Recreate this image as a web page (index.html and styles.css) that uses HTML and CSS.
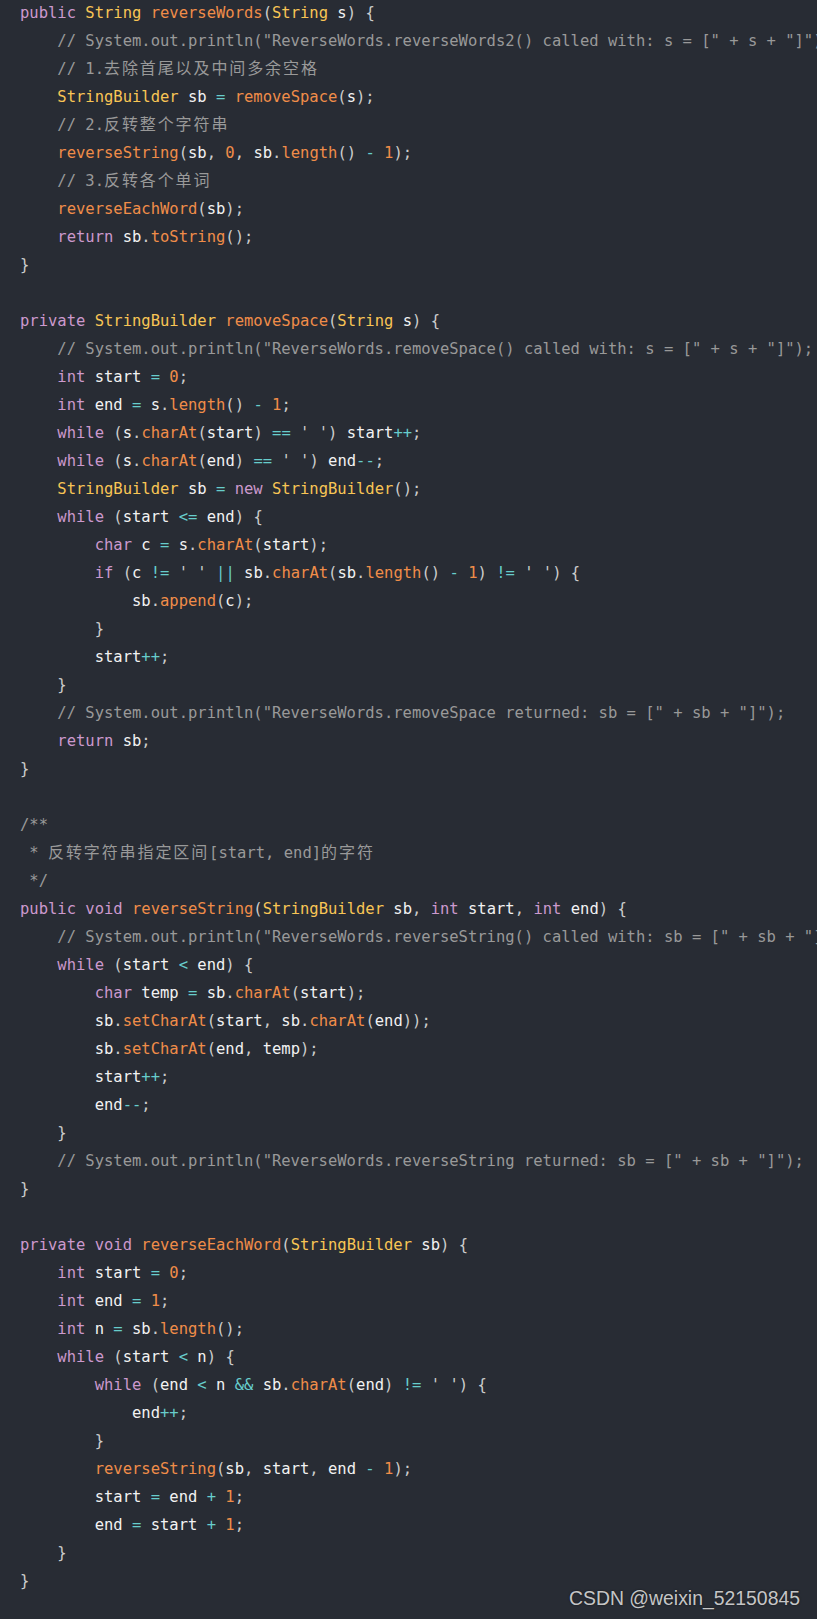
FILE: index.html
```html
<!DOCTYPE html>
<html lang="zh">
<head>
<meta charset="utf-8">
<title>reverseWords</title>
<link rel="stylesheet" href="styles.css">
</head>
<body>
<main class="page">
<pre class="code"><code><span class="k">public</span> <span class="t">String</span> <span class="f">reverseWords</span><span class="p">(</span><span class="t">String</span> s<span class="p">)</span> <span class="p">{</span>
    <span class="c">// System.out.println("ReverseWords.reverseWords2() called with: s = [" + s + "]");</span>
    <span class="c">// 1.<span class="zh">去除首尾以及中间多余空格</span></span>
    <span class="t">StringBuilder</span> sb <span class="o">=</span> <span class="f">removeSpace</span><span class="p">(</span>s<span class="p">);</span>
    <span class="c">// 2.<span class="zh">反转整个字符串</span></span>
    <span class="f">reverseString</span><span class="p">(</span>sb<span class="p">,</span> <span class="n">0</span><span class="p">,</span> sb<span class="p">.</span><span class="f">length</span><span class="p">()</span> <span class="o">-</span> <span class="n">1</span><span class="p">);</span>
    <span class="c">// 3.<span class="zh">反转各个单词</span></span>
    <span class="f">reverseEachWord</span><span class="p">(</span>sb<span class="p">);</span>
    <span class="k">return</span> sb<span class="p">.</span><span class="f">toString</span><span class="p">();</span>
<span class="p">}</span>

<span class="k">private</span> <span class="t">StringBuilder</span> <span class="f">removeSpace</span><span class="p">(</span><span class="t">String</span> s<span class="p">)</span> <span class="p">{</span>
    <span class="c">// System.out.println("ReverseWords.removeSpace() called with: s = [" + s + "]");</span>
    <span class="k">int</span> start <span class="o">=</span> <span class="n">0</span><span class="p">;</span>
    <span class="k">int</span> end <span class="o">=</span> s<span class="p">.</span><span class="f">length</span><span class="p">()</span> <span class="o">-</span> <span class="n">1</span><span class="p">;</span>
    <span class="k">while</span> <span class="p">(</span>s<span class="p">.</span><span class="f">charAt</span><span class="p">(</span>start<span class="p">)</span> <span class="o">==</span> <span class="p">' ')</span> start<span class="o">++</span><span class="p">;</span>
    <span class="k">while</span> <span class="p">(</span>s<span class="p">.</span><span class="f">charAt</span><span class="p">(</span>end<span class="p">)</span> <span class="o">==</span> <span class="p">' ')</span> end<span class="o">--</span><span class="p">;</span>
    <span class="t">StringBuilder</span> sb <span class="o">=</span> <span class="k">new</span> <span class="t">StringBuilder</span><span class="p">();</span>
    <span class="k">while</span> <span class="p">(</span>start <span class="o">&lt;=</span> end<span class="p">)</span> <span class="p">{</span>
        <span class="k">char</span> c <span class="o">=</span> s<span class="p">.</span><span class="f">charAt</span><span class="p">(</span>start<span class="p">);</span>
        <span class="k">if</span> <span class="p">(</span>c <span class="o">!=</span> <span class="p">' '</span> <span class="o">||</span> sb<span class="p">.</span><span class="f">charAt</span><span class="p">(</span>sb<span class="p">.</span><span class="f">length</span><span class="p">()</span> <span class="o">-</span> <span class="n">1</span><span class="p">)</span> <span class="o">!=</span> <span class="p">' ')</span> <span class="p">{</span>
            sb<span class="p">.</span><span class="f">append</span><span class="p">(</span>c<span class="p">);</span>
        <span class="p">}</span>
        start<span class="o">++</span><span class="p">;</span>
    <span class="p">}</span>
    <span class="c">// System.out.println("ReverseWords.removeSpace returned: sb = [" + sb + "]");</span>
    <span class="k">return</span> sb<span class="p">;</span>
<span class="p">}</span>

<span class="c">/**</span>
<span class="c"> * <span class="zh">反转字符串指定区间</span>[start, end]<span class="zh">的字符</span></span>
<span class="c"> */</span>
<span class="k">public</span> <span class="k">void</span> <span class="f">reverseString</span><span class="p">(</span><span class="t">StringBuilder</span> sb<span class="p">,</span> <span class="k">int</span> start<span class="p">,</span> <span class="k">int</span> end<span class="p">)</span> <span class="p">{</span>
    <span class="c">// System.out.println("ReverseWords.reverseString() called with: sb = [" + sb + "], start = [" + start + "], end = [" + end + "]");</span>
    <span class="k">while</span> <span class="p">(</span>start <span class="o">&lt;</span> end<span class="p">)</span> <span class="p">{</span>
        <span class="k">char</span> temp <span class="o">=</span> sb<span class="p">.</span><span class="f">charAt</span><span class="p">(</span>start<span class="p">);</span>
        sb<span class="p">.</span><span class="f">setCharAt</span><span class="p">(</span>start<span class="p">,</span> sb<span class="p">.</span><span class="f">charAt</span><span class="p">(</span>end<span class="p">));</span>
        sb<span class="p">.</span><span class="f">setCharAt</span><span class="p">(</span>end<span class="p">,</span> temp<span class="p">);</span>
        start<span class="o">++</span><span class="p">;</span>
        end<span class="o">--</span><span class="p">;</span>
    <span class="p">}</span>
    <span class="c">// System.out.println("ReverseWords.reverseString returned: sb = [" + sb + "]");</span>
<span class="p">}</span>

<span class="k">private</span> <span class="k">void</span> <span class="f">reverseEachWord</span><span class="p">(</span><span class="t">StringBuilder</span> sb<span class="p">)</span> <span class="p">{</span>
    <span class="k">int</span> start <span class="o">=</span> <span class="n">0</span><span class="p">;</span>
    <span class="k">int</span> end <span class="o">=</span> <span class="n">1</span><span class="p">;</span>
    <span class="k">int</span> n <span class="o">=</span> sb<span class="p">.</span><span class="f">length</span><span class="p">();</span>
    <span class="k">while</span> <span class="p">(</span>start <span class="o">&lt;</span> n<span class="p">)</span> <span class="p">{</span>
        <span class="k">while</span> <span class="p">(</span>end <span class="o">&lt;</span> n <span class="o">&amp;&amp;</span> sb<span class="p">.</span><span class="f">charAt</span><span class="p">(</span>end<span class="p">)</span> <span class="o">!=</span> <span class="p">' ')</span> <span class="p">{</span>
            end<span class="o">++</span><span class="p">;</span>
        <span class="p">}</span>
        <span class="f">reverseString</span><span class="p">(</span>sb<span class="p">,</span> start<span class="p">,</span> end <span class="o">-</span> <span class="n">1</span><span class="p">);</span>
        start <span class="o">=</span> end <span class="o">+</span> <span class="n">1</span><span class="p">;</span>
        end <span class="o">=</span> start <span class="o">+</span> <span class="n">1</span><span class="p">;</span>
    <span class="p">}</span>
<span class="p">}</span></code></pre>
<div class="watermark">CSDN @weixin_52150845</div>
</main>
</body>
</html>
```

FILE: styles.css
```css
html, body {
  margin: 0;
  padding: 0;
  background: #282c34;
}

.page {
  position: relative;
  width: 817px;
  height: 1619px;
  overflow: hidden;
  background: #282c34;
}

.code {
  margin: -1px 0 0 0;
  padding: 0 0 0 20px;
  font-family: "DejaVu Sans Mono", "Noto Sans CJK SC", monospace;
  font-size: 15.5px;
  line-height: 28px;
  color: #f2f2f2;
  white-space: pre;
}

.code code {
  font-family: inherit;
}

.zh {
  font-family: "Noto Sans CJK SC", sans-serif;
  font-size: 16px;
  line-height: 16px;
  letter-spacing: 1.9px;
}

.k { color: #cc99cd; }
.t { color: #f8c555; }
.f { color: #f08d49; }
.n { color: #f08d49; }
.o { color: #67cdcc; }
.p { color: #cccccc; }
.c { color: #999999; }

.watermark {
  position: absolute;
  right: 17px;
  bottom: 11px;
  font-family: "Liberation Sans", Arial, sans-serif;
  font-size: 19.4px;
  line-height: 1;
  color: rgba(230, 230, 230, 0.85);
  text-shadow: 0 0 2px rgba(0, 0, 0, 0.6);
}
```
